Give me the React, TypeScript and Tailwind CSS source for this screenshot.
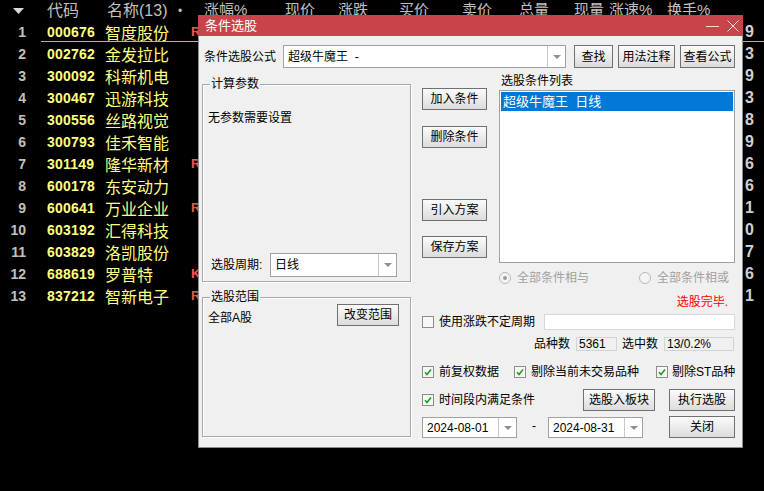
import React from 'react';

type Row = { n: number; code: string; name: string; flag: string; last: string };

const rows: Row[] = [
  { n: 1, code: '000676', name: '智度股份', flag: 'R', last: '9' },
  { n: 2, code: '002762', name: '金发拉比', flag: '', last: '3' },
  { n: 3, code: '300092', name: '科新机电', flag: '', last: '9' },
  { n: 4, code: '300467', name: '迅游科技', flag: '', last: '3' },
  { n: 5, code: '300556', name: '丝路视觉', flag: '', last: '8' },
  { n: 6, code: '300793', name: '佳禾智能', flag: '', last: '9' },
  { n: 7, code: '301149', name: '隆华新材', flag: 'R', last: '6' },
  { n: 8, code: '600178', name: '东安动力', flag: '', last: '6' },
  { n: 9, code: '600641', name: '万业企业', flag: 'R', last: '1' },
  { n: 10, code: '603192', name: '汇得科技', flag: '', last: '0' },
  { n: 11, code: '603829', name: '洛凯股份', flag: '', last: '7' },
  { n: 12, code: '688619', name: '罗普特', flag: 'K', last: '6' },
  { n: 13, code: '837212', name: '智新电子', flag: 'R', last: '1' },
];

const Btn = ({ children, className = '' }: { children: React.ReactNode; className?: string }) => (
  <div
    className={`flex items-center justify-center border border-[#707070] bg-linear-to-b from-[#fbfbfb] to-[#dcdcdc] text-[12px] text-black shrink-0 whitespace-nowrap ${className}`}
  >
    {children}
  </div>
);

const Check = ({ on }: { on?: boolean }) => (
  <div className="w-[12px] h-[12px] border border-[#8c8c8c] bg-[#f7f7f7] flex items-center justify-center shrink-0">
    {on && (
      <svg width="8" height="8" viewBox="0 0 8 8">
        <path d="M1 4.2 L3 6.5 L7 1.5" stroke="#1f9d1f" strokeWidth="1.6" fill="none" />
      </svg>
    )}
  </div>
);

const Arrow = () => (
  <svg width="8" height="4" viewBox="0 0 8 4">
    <path d="M0 0h8L4 4z" fill="#8f8f8f" />
  </svg>
);

const Combo = ({ text, className = '' }: { text: string; className?: string }) => (
  <div className={`flex bg-white border border-[#a0a0a0] shrink-0 ${className}`}>
    <div className="flex-1 flex items-center pl-[4px] text-[12px] whitespace-pre">{text}</div>
    <div className="w-[18px] border-l border-[#c8c8c8] flex items-center justify-center">
      <Arrow />
    </div>
  </div>
);

const Group = ({
  title,
  className = '',
  children,
}: {
  title: string;
  className?: string;
  children: React.ReactNode;
}) => (
  <div className={`relative border border-[#a8a8a8] shadow-[inset_1px_1px_0_#fff,1px_1px_0_#fff] ${className}`}>
    <span className="absolute left-[7px] -top-[8px] bg-[#f0f0f0] px-[1px] leading-[14px] text-[12px]">{title}</span>
    {children}
  </div>
);

const Radio = ({ on }: { on?: boolean }) => (
  <div className="w-[12px] h-[12px] rounded-full border border-[#b8b8b8] bg-[#f4f4f4] flex items-center justify-center shrink-0">
    {on && <div className="w-[4px] h-[4px] rounded-full bg-[#9a9a9a]" />}
  </div>
);

export default function App() {
  return (
    <div className="relative w-[764px] h-[491px] bg-black overflow-hidden font-['Liberation_Sans','Noto_Sans_CJK_SC',sans-serif]">
      {/* header */}
      <div className="flex items-center h-[21px] text-[15px] text-[#c0c0c0] whitespace-nowrap">
        <div className="w-[36px] flex justify-center">
          <svg width="11" height="6" viewBox="0 0 11 6">
            <path d="M0 0h11L5.5 6z" fill="#d8d8d8" />
          </svg>
        </div>
        <div className="ml-[11px] w-[60px] text-[16px]">代码</div>
        <div className="w-[71px] text-[16px]">名称(13)</div>
        <div className="w-[26px] text-[12px]">•</div>
        <div className="w-[81px]">涨幅%</div>
        <div className="w-[53px]">现价</div>
        <div className="w-[61px]">涨跌</div>
        <div className="w-[63px]">买价</div>
        <div className="w-[57px]">卖价</div>
        <div className="w-[55px]">总量</div>
        <div className="w-[35px]">现量</div>
        <div className="w-[58px]">涨速%</div>
        <div>换手%</div>
      </div>

      {/* rows */}
      {rows.map((r) => (
        <div key={r.n} className="relative flex items-center h-[22px] whitespace-nowrap">
          <div className="w-[26px] text-right text-[14px] font-bold text-[#c0c0c0]">{r.n}</div>
          <div className="ml-[21px] w-[58px] text-[14px] font-bold text-[#ffff80] tracking-[0.2px]">{r.code}</div>
          <div className="w-[86px] text-[16px] text-[#ffff80] font-['Noto_Sans_CJK_SC',sans-serif]">{r.name}</div>
          <div className="w-[20px] text-[13px] font-bold text-[#ff5050]">{r.flag}</div>
          <div className="ml-auto w-[19px] text-[16px] font-bold text-[#d0d0d0]">{r.last}</div>
          {r.n === 1 && <div className="absolute left-[41px] right-0 bottom-[1px] h-px bg-[#c8c800]" />}
        </div>
      ))}

      {/* dialog */}
      <div className="absolute left-[198px] top-[15px] w-[545px] h-[433px] bg-[#f0f0f0] border-x border-b border-[#8c8c8c] flex flex-col text-[12px] text-black font-['Liberation_Sans','Noto_Sans_CJK_SC',sans-serif]">
        <div className="h-[21px] -mx-px bg-[#c9444a] flex items-center pl-[7px] text-white text-[13px] shrink-0">
          <span>条件选股</span>
          <div className="ml-auto flex items-center gap-[8px] pr-[4px]">
            <svg width="13" height="12" viewBox="0 0 13 12">
              <path d="M0 6.5h13" stroke="#f3dede" strokeWidth="1" />
            </svg>
            <svg width="12" height="12" viewBox="0 0 12 12">
              <path d="M0.5 0.5L11.5 11.5M11.5 0.5L0.5 11.5" stroke="#f3dede" strokeWidth="1" />
            </svg>
          </div>
        </div>

        <div className="flex-1 pl-[3px]">
          {/* formula row */}
          <div className="mt-[9px] flex items-center h-[23px]">
            <span className="ml-[2px] w-[72px] whitespace-nowrap">条件选股公式</span>
            <Combo text="超级牛魔王  -" className="ml-[7px] w-[283px] h-[23px]" />
            <Btn className="ml-[8px] w-[39px] h-[23px]">查找</Btn>
            <Btn className="ml-[5px] w-[57px] h-[23px]">用法注释</Btn>
            <Btn className="ml-[5px] w-[55px] h-[23px]">查看公式</Btn>
          </div>

          <div className="flex">
            {/* left column */}
            <div className="w-[209px] flex flex-col">
              <Group title="计算参数" className="mt-[16px] h-[198px] flex flex-col justify-between pt-[26px] pb-[4px] px-[5px]">
                <span className="leading-[14px]">无参数需要设置</span>
                <div className="flex items-center">
                  <span className="ml-[3px] w-[54px] whitespace-nowrap">选股周期:</span>
                  <Combo text="日线" className="ml-[5px] w-[127px] h-[24px]" />
                </div>
              </Group>
              <Group title="选股范围" className="mt-[15px] h-[140px] pt-[6px] px-[5px]">
                <div className="flex items-start">
                  <span className="mt-[7px] leading-[14px]">全部A股</span>
                  <Btn className="ml-auto mr-[6px] w-[62px] h-[22px]">改变范围</Btn>
                </div>
              </Group>
            </div>

            {/* right area */}
            <div className="ml-[11px] w-[313px] flex flex-col">
              <div className="flex">
                <div className="w-[65px] flex flex-col">
                  <Btn className="mt-[20px] h-[22px]">加入条件</Btn>
                  <Btn className="mt-[16px] h-[22px]">删除条件</Btn>
                  <Btn className="mt-[51px] h-[22px]">引入方案</Btn>
                  <Btn className="mt-[15px] h-[22px]">保存方案</Btn>
                </div>
                <div className="ml-[12px] w-[236px] flex flex-col">
                  <div className="mt-[6px] h-[16px] pl-[2px] leading-[14px]">选股条件列表</div>
                  <div className="h-[173px] bg-white border border-[#a0a0a0] p-[1px]">
                    <div className="h-[19px] bg-[#0078d7] text-white text-[13px] flex items-center pl-[2px] whitespace-pre">
                      超级牛魔王  日线
                    </div>
                  </div>
                  <div className="mt-[9px] h-[12px] flex items-center text-[#a0a0a0] pr-[6px]">
                    <Radio on />
                    <span className="ml-[6px]">全部条件相与</span>
                    <div className="ml-auto flex items-center">
                      <Radio />
                      <span className="ml-[6px]">全部条件相或</span>
                    </div>
                  </div>
                  <div className="mt-[12px] h-[12px] leading-[12px] text-right pr-[7px] text-[#ff0000]">选股完毕.</div>
                </div>
              </div>

              {/* bottom options */}
              <div className="mt-[6px] flex items-center h-[16px]">
                <Check />
                <span className="ml-[5px] w-[96px] whitespace-nowrap">使用涨跌不定周期</span>
                <div className="ml-[9px] flex-1 h-[16px] bg-white border border-[#d8d8d8]" />
              </div>
              <div className="mt-[7px] flex items-center justify-end h-[14px] pr-[1px]">
                <span>品种数</span>
                <div className="ml-[6px] w-[41px] h-[14px] border border-[#d4d4d4] flex items-center pl-[2px]">5361</div>
                <span className="ml-[5px]">选中数</span>
                <div className="ml-[6px] w-[70px] h-[14px] border border-[#d4d4d4] flex items-center pl-[2px]">13/0.2%</div>
              </div>
              <div className="mt-[15px] flex items-center h-[12px] whitespace-nowrap">
                <Check on />
                <span className="ml-[5px]">前复权数据</span>
                <div className="ml-[15px]">
                  <Check on />
                </div>
                <span className="ml-[5px]">剔除当前未交易品种</span>
                <div className="ml-[17px]">
                  <Check on />
                </div>
                <span className="ml-[4px]">剔除ST品种</span>
              </div>
              <div className="mt-[11px] flex items-center h-[22px]">
                <Check on />
                <span className="ml-[5px] whitespace-nowrap">时间段内满足条件</span>
                <Btn className="ml-auto w-[72px] h-[22px]">选股入板块</Btn>
                <Btn className="ml-[14px] w-[66px] h-[22px]">执行选股</Btn>
              </div>
              <div className="mt-[5px] flex items-end h-[22px]">
                <Combo text="2024-08-01" className="w-[95px] h-[21px]" />
                <span className="ml-[15px] mb-[3px]">-</span>
                <Combo text="2024-08-31" className="ml-[12px] w-[95px] h-[21px]" />
                <Btn className="ml-auto w-[66px] h-[22px]">关闭</Btn>
              </div>
            </div>
          </div>
        </div>
      </div>
    </div>
  );
}
